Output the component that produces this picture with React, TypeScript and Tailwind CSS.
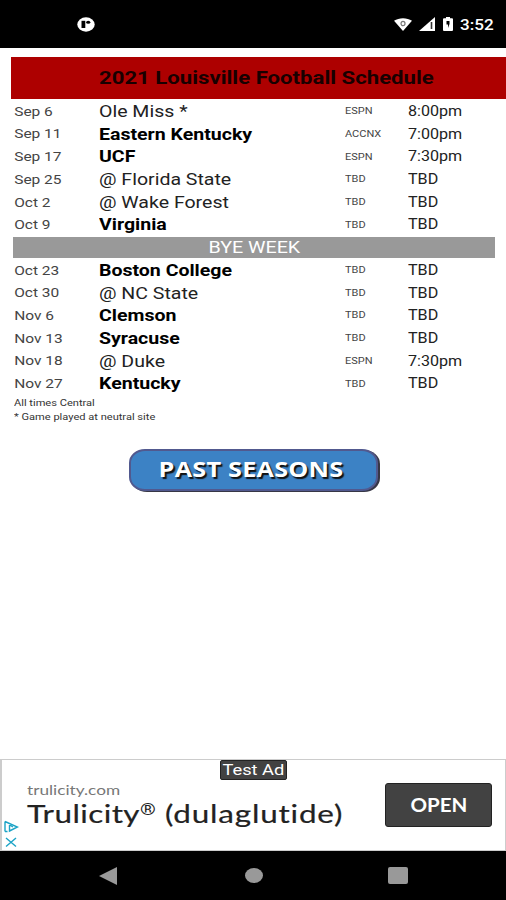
const games = [
  { date: "Sep 6", team: "Ole Miss *", network: "ESPN", time: "8:00pm" },
  { date: "Sep 11", team: "Eastern Kentucky", network: "ACCNX", time: "7:00pm", home: true },
  { date: "Sep 17", team: "UCF", network: "ESPN", time: "7:30pm", home: true },
  { date: "Sep 25", team: "@ Florida State", network: "TBD", time: "TBD" },
  { date: "Oct 2", team: "@ Wake Forest", network: "TBD", time: "TBD" },
  { date: "Oct 9", team: "Virginia", network: "TBD", time: "TBD", home: true },
  null,
  { date: "Oct 23", team: "Boston College", network: "TBD", time: "TBD", home: true },
  { date: "Oct 30", team: "@ NC State", network: "TBD", time: "TBD" },
  { date: "Nov 6", team: "Clemson", network: "TBD", time: "TBD", home: true },
  { date: "Nov 13", team: "Syracuse", network: "TBD", time: "TBD", home: true },
  { date: "Nov 18", team: "@ Duke", network: "ESPN", time: "7:30pm" },
  { date: "Nov 27", team: "Kentucky", network: "TBD", time: "TBD", home: true },
];

function StatusBar() {
  return (
    <header className="flex h-12 items-center bg-black pl-[77px] pr-3 text-white">
      <svg className="h-[15px] w-[18px]" viewBox="0 0 18 15">
        <ellipse cx="9" cy="7.5" rx="8.7" ry="7.2" fill="#fff" />
        <path d="M4.5 3.8h3.8v7.2H4.5z" fill="#000" />
        <ellipse cx="11.2" cy="5.2" rx="2.1" ry="1.5" fill="#000" />
      </svg>
      <svg className="ml-auto h-[13px] w-[18px]" viewBox="0 0 18 13">
        <path d="M0 2.8C5 -.7 13 -.7 18 2.8L9 13z" fill="#fff" />
        <ellipse cx="9" cy="5.5" rx="2" ry="2.2" fill="none" stroke="#777" strokeWidth="1.2" />
      </svg>
      <svg className="ml-[7px] h-[14px] w-4" viewBox="0 0 16 14">
        <path d="M0 14L16 0v14z" fill="#fff" />
        <path d="M12.5 5v7" stroke="#333" strokeWidth="1.6" />
      </svg>
      <svg className="ml-2 h-[14px] w-[10px]" viewBox="0 0 10 14">
        <path d="M3 0h4v1.2h2a1 1 0 011 1V13a1 1 0 01-1 1H1a1 1 0 01-1-1V2.2a1 1 0 011-1h2z" fill="#fff" />
        <path d="M3.5 4h3v3L5 11V7.5H3.5z" fill="#000" />
      </svg>
      <span className="ml-[7px] w-[34px] pt-[2px] text-[15px] font-medium">
        <span className="inline-block origin-left scale-x-[1.14]">3:52</span>
      </span>
    </header>
  );
}

function Schedule() {
  return (
    <section>
      <h1 className="ml-[11px] flex h-[42px] items-center bg-[#ad0000] pb-[2px] pl-[88px] text-[18px] font-bold text-[#180000]">
        <span className="origin-left scale-x-[1.23] whitespace-nowrap">2021 Louisville Football Schedule</span>
      </h1>
      <div className="mt-px ml-[13px] w-[482px]">
        {games.map((game, i) =>
          game ? (
            <div
              key={i}
              className="grid h-[22.7px] grid-cols-[86px_246px_63px_87px] items-center whitespace-nowrap text-[#222]"
            >
              <span className="origin-left scale-x-[1.19] pb-px pl-px text-[13px] text-[#444]">{game.date}</span>
              <span
                className={`origin-left scale-x-[1.22] text-[16px] ${game.home ? "font-bold text-black" : ""}`}
              >
                {game.team}
              </span>
              <span className="origin-left scale-x-[1.22] text-[9px] text-[#444]">{game.network}</span>
              <span className="origin-left scale-x-[1.15] pb-px text-[14px]">{game.time}</span>
            </div>
          ) : (
            <div key={i} className="flex h-[22.7px] items-center">
              <div className="flex h-[21px] w-full items-center justify-center bg-[#999] pt-px text-[16px] text-white">
                <span className="scale-x-[1.23]">BYE WEEK</span>
              </div>
            </div>
          ),
        )}
        <div className="pt-px pl-px text-[9px] leading-[14.5px] text-[#333]">
          <p className="origin-left scale-x-[1.23]">All times Central</p>
          <p className="origin-left scale-x-[1.23]">* Game played at neutral site</p>
        </div>
      </div>
    </section>
  );
}

function AdBanner() {
  return (
    <aside className="relative flex h-[92px] items-center justify-between border border-l-2 border-[#ccc] bg-white pl-[25px] pr-[13px] font-['Lato','Liberation_Sans',sans-serif] [font-variant-ligatures:none]">
      <div className="pb-[2px] whitespace-nowrap">
        <p className="origin-left scale-x-[1.23] text-[14px] leading-[18px] text-[#777]">trulicity.com</p>
        <p className="-mt-px flex origin-left scale-x-[1.257] text-[25px] leading-[30px] tracking-[0.35px] text-[#222] [-webkit-text-stroke:0.2px_#222]">
          Trulicity
          <span className="mr-[7px] font-['Roboto',sans-serif] text-[16px] leading-[23px] [-webkit-text-stroke:0]">®</span>
          <span className="tracking-[0.65px]">(dulaglutide)</span>
        </p>
      </div>
      <button className="h-11 w-[107px] rounded-[3px] border border-[#222] bg-[#424242] text-[18px] font-bold text-white">
        <span className="inline-block scale-x-[1.14]">OPEN</span>
      </button>
      <span className="absolute left-[218px] top-0 flex h-5 w-[67px] items-center justify-center rounded-[2px] border border-[#222] bg-[#424242] pt-px font-['Roboto',sans-serif] text-[15px] text-white">
        <span className="scale-x-[1.22] whitespace-nowrap">Test Ad</span>
      </span>
      <svg className="absolute bottom-[2px] left-[2px] h-7 w-[15px]" viewBox="0 0 15 28" fill="none" stroke="#1ba3c6" strokeWidth="1.4">
        <path d="M1 1.5v10M1 1.5L13.5 7l-8 4V5L9 7M1 11.5h2.5" />
        <path d="M2 18l10 8.5M12 18L2 26.5" />
      </svg>
    </aside>
  );
}

function NavigationBar() {
  return (
    <nav className="flex h-[49px] items-center justify-between bg-black pl-[99px] pr-[98px]">
      <svg className="h-[18px] w-[18px]" viewBox="0 0 18 18" fill="#999">
        <path d="M0 9L18 0v18z" />
      </svg>
      <span className="ml-[2px] h-[15px] w-[18px] rounded-[50%] bg-[#999]" />
      <span className="h-[17px] w-5 rounded-[2px] bg-[#999]" />
    </nav>
  );
}

export default function App() {
  return (
    <div className="flex h-[900px] w-[506px] flex-col overflow-hidden bg-white font-['Roboto',sans-serif]">
      <StatusBar />
      <main className="flex flex-1 flex-col pt-[9px]">
        <Schedule />
        <button className="mt-6 ml-[129px] flex h-[42px] w-[249px] items-center justify-center rounded-[16px/14px] border-2 border-[#51598f] bg-[#3c82c5] pr-[5px] pb-px font-['Open_Sans',sans-serif] text-[21px] font-bold text-white shadow-[2px_1px_0_#373746] [text-shadow:1.5px_2px_1px_#111]">
          <span className="scale-x-[1.2] whitespace-nowrap tracking-[0.2px]">PAST SEASONS</span>
        </button>
      </main>
      <AdBanner />
      <NavigationBar />
    </div>
  );
}
